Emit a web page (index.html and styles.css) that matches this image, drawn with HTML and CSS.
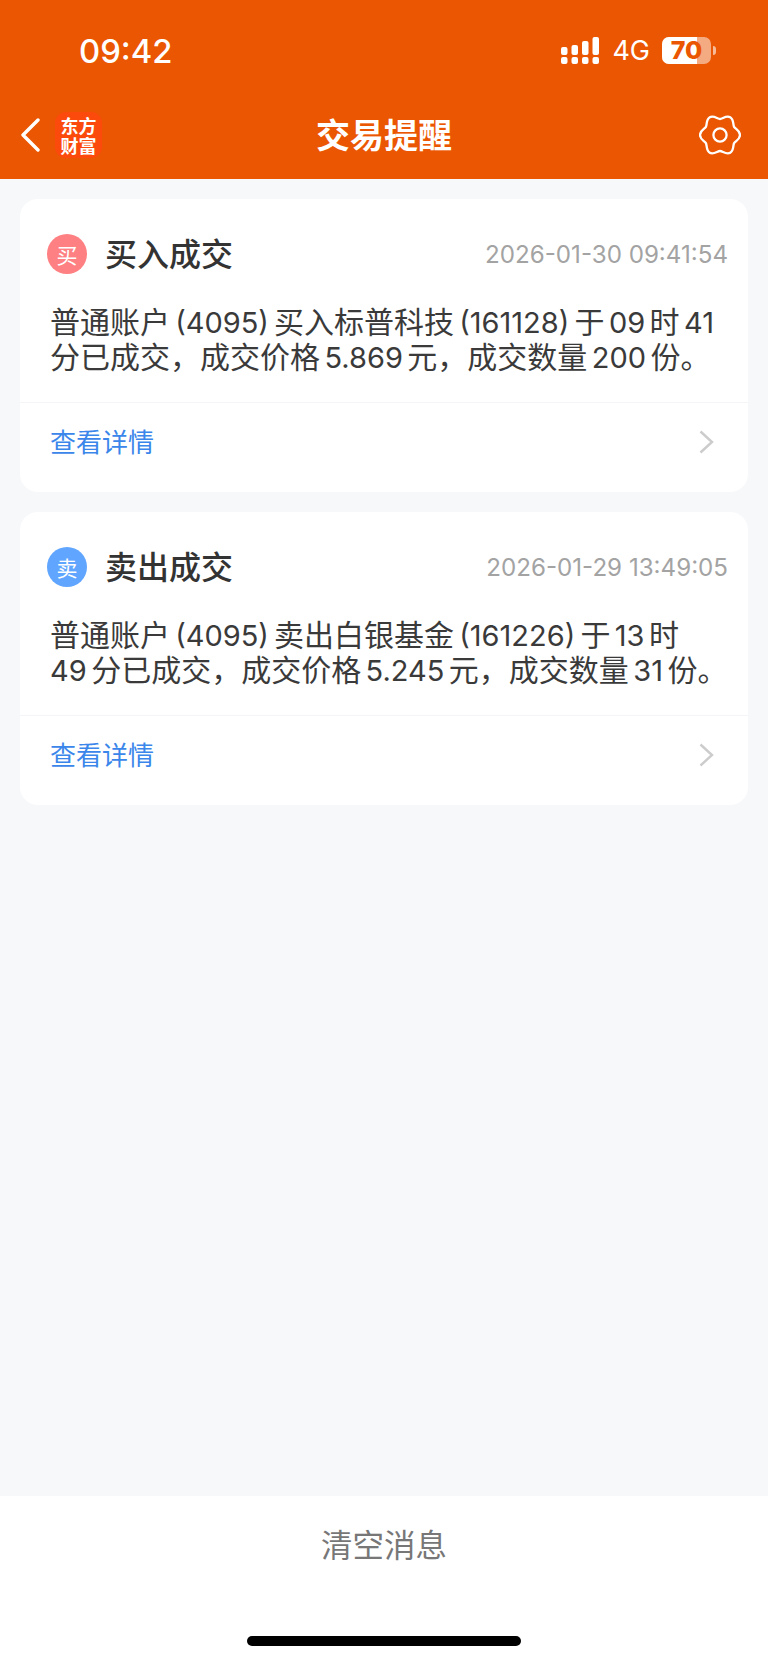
FILE: index.html
```html
<!DOCTYPE html>
<html lang="zh-CN">
<head>
<meta charset="utf-8">
<title>交易提醒</title>
<link rel="stylesheet" href="styles.css">
</head>
<body>
<div class="app">
  <header class="top">
    <div class="status">
      <span class="clock">09:42</span>
      <div class="status-right">
        <svg class="signal" width="38" height="27" viewBox="0 0 38 27">
          <g fill="#fff">
            <rect x="0" y="20" width="6.5" height="7" rx="2"/><rect x="10.5" y="20" width="6.5" height="7" rx="2"/><rect x="21" y="20" width="6.5" height="7" rx="2"/><rect x="31.5" y="20" width="6.5" height="7" rx="2"/>
            <rect x="0" y="10" width="6.5" height="8" rx="2"/><rect x="10.5" y="8" width="6.5" height="10" rx="2"/><rect x="21" y="4" width="6.5" height="14" rx="2"/><rect x="31.5" y="0" width="6.5" height="18" rx="2"/>
          </g>
        </svg>
        <span class="net">4G</span>
        <div class="battery"><div class="battery-fill"></div><span class="battery-num">70</span></div>
        <span class="battery-tip"></span>
      </div>
    </div>
    <nav class="nav">
      <div class="nav-left">
        <svg class="back" width="20" height="34" viewBox="0 0 20 34"><path d="M18 2 L3 17 L18 32" fill="none" stroke="#fff" stroke-width="3.4" stroke-linecap="round" stroke-linejoin="round"/></svg>
        <div class="logo">东方财富</div>
      </div>
      <h1 class="title">交易提醒</h1>
      <svg class="gear" width="42" height="42" viewBox="0 0 42 42">
        <path d="M41 21 C41 25.5 36.35 26.99 35.1 29.15 C33.85 31.31 35.1 36.55 31.2 38.8 C27.3 41.05 23.5 37 21 37 C18.5 37 14.7 41.05 10.8 38.8 C6.9 36.55 8.15 31.31 6.9 29.15 C5.65 26.99 1 25.5 1 21 C1 16.5 5.65 15.01 6.9 12.85 C8.15 10.69 6.9 5.45 10.8 3.2 C14.7 .95 18.5 5 21 5 C23.5 5 27.3 .95 31.2 3.2 C35.1 5.45 33.85 10.69 35.1 12.85 C36.35 15.01 41 16.5 41 21 Z" fill="none" stroke="#fff" stroke-width="2.3" stroke-linejoin="round"/>
        <circle cx="21" cy="21" r="6.6" fill="none" stroke="#fff" stroke-width="2.3"/>
      </svg>
    </nav>
  </header>

  <main class="list">
    <article class="card">
      <div class="card-body">
        <div class="card-head">
          <span class="badge badge-buy">买</span>
          <h2 class="card-title">买入成交</h2>
          <time class="card-time">2026-01-30 09:41:54</time>
        </div>
        <p class="card-text">普通账户 <span class="n p">(4095)</span> 买入标普科技 <span class="n p">(161128)</span> 于 <span class="n">09</span> 时 <span class="n">41</span><br>分已成交，成交价格 <span class="n">5.869</span> 元，成交数量 <span class="n">200</span> 份。</p>
      </div>
      <div class="card-foot">
        <span class="link">查看详情</span>
        <svg width="15" height="24" viewBox="0 0 15 24"><path d="M1.5 1.5 L13 12 L1.5 22.5" fill="none" stroke="#ccc" stroke-width="2.4"/></svg>
      </div>
    </article>
    <article class="card">
      <div class="card-body">
        <div class="card-head">
          <span class="badge badge-sell">卖</span>
          <h2 class="card-title">卖出成交</h2>
          <time class="card-time">2026-01-29 13:49:05</time>
        </div>
        <p class="card-text">普通账户 <span class="n p">(4095)</span> 卖出白银基金 <span class="n p">(161226)</span> 于 <span class="n">13</span> 时<br><span class="n">49</span> 分已成交，成交价格 <span class="n">5.245</span> 元，成交数量 <span class="n">31</span> 份。</p>
      </div>
      <div class="card-foot">
        <span class="link">查看详情</span>
        <svg width="15" height="24" viewBox="0 0 15 24"><path d="M1.5 1.5 L13 12 L1.5 22.5" fill="none" stroke="#ccc" stroke-width="2.4"/></svg>
      </div>
    </article>
  </main>

  <footer class="foot">
    <span class="clear">清空消息</span>
    <span class="home"></span>
  </footer>
</div>
</body>
</html>
```
FILE: styles.css
```css
* { box-sizing: border-box; margin: 0; padding: 0; }
html, body { height: 100%; }
body { font-family: "Inter", "Noto Sans CJK SC", sans-serif; background: #f7f8fa; color: #333; }
.app { width: 768px; height: 1663px; display: flex; flex-direction: column; overflow: hidden; }

.top { background: #eb5602; color: #fff; height: 179px; flex: none; }
.status { height: 90px; padding: 37px 52px 0 79px; display: flex; justify-content: space-between; align-items: flex-start; }
.clock { font-size: 32.8px; line-height: 28px; font-weight: 500; }
.status-right { display: flex; align-items: center; height: 27px; }
.signal { display: block; }
.net { font-size: 27px; line-height: 27px; margin: 0 12px 0 13px; }
.battery { position: relative; width: 49px; height: 27px; border-radius: 7px; background: rgba(255,255,255,.5); display: flex; align-items: center; justify-content: center; }
.battery-fill { position: absolute; left: 0; top: 0; bottom: 0; width: 35px; background: #fff; border-radius: 7px 0 0 7px; }
.battery-num { position: relative; font-size: 25px; font-weight: 800; color: #eb5602; line-height: 27px; }
.battery-tip { width: 3px; height: 9px; margin-left: 2px; background: rgba(255,255,255,.6); border-radius: 0 3px 3px 0; }

.nav { height: 89px; display: flex; align-items: center; justify-content: space-between; padding: 0 27px 0 20px; position: relative; }
.nav-left { display: flex; align-items: center; gap: 15px; }
.back { display: block; }
.logo { width: 47px; height: 46px; padding: 3px 5px; border-radius: 11px; background: #fb4a0c; color: #fff; font-size: 18px; font-weight: 700; line-height: 20px; text-align: center; font-family: "Noto Sans CJK SC", sans-serif; }
.title { position: absolute; left: 0; right: 0; text-align: center; font-size: 34px; font-weight: 700; line-height: 40px; margin-top: -2px; font-family: "Noto Sans CJK SC", sans-serif; }
.gear { display: block; position: relative; }

.list { flex: 1; padding: 20px 20px 0; display: flex; flex-direction: column; gap: 20px; }
.card { background: #fff; border-radius: 18px; }
.card-body { padding: 35px 20px 0 27px; height: 204px; border-bottom: 1px solid #f3f5f9; }
.card-head { display: flex; align-items: center; height: 40px; }
.badge { width: 40px; height: 40px; border-radius: 50%; color: #fff; font-size: 21px; text-align: center; line-height: 40px; flex: none; font-family: "Noto Sans CJK SC", sans-serif; }
.badge-buy { background: #ff8082; }
.badge-sell { background: #60a5ff; }
.card-title { font-size: 32px; font-weight: 500; margin: -5px 0 0 18px; color: #333; line-height: 40px; font-family: "Noto Sans CJK SC", sans-serif; }
.card-time { margin-left: auto; font-size: 24.15px; color: #a3a3a3; }
.card-text { margin: 31px 0 0 3px; font-size: 30px; line-height: 35px; white-space: nowrap; color: #3a3a3a; word-spacing: -3.9px; font-family: "Liberation Sans", "Noto Sans CJK SC", sans-serif; }
.n { font-family: "Inter", sans-serif; font-size: 29px; line-height: 1; }
.p { margin: 0 0.7px; }
.card-foot { height: 89px; padding: 0 34px 11px 30px; display: flex; align-items: center; justify-content: space-between; }
.link { font-size: 26px; line-height: 30px; margin-bottom: 2px; color: #3b86ea; font-family: "Noto Sans CJK SC", sans-serif; }

.foot { height: 167px; flex: none; background: #fff; display: flex; flex-direction: column; align-items: center; padding-top: 25px; }
.clear { font-size: 31.5px; line-height: 44px; color: #777; font-family: "Noto Sans CJK SC", sans-serif; }
.home { margin-top: 71px; width: 274px; height: 10px; border-radius: 5px; background: #000; }
```
